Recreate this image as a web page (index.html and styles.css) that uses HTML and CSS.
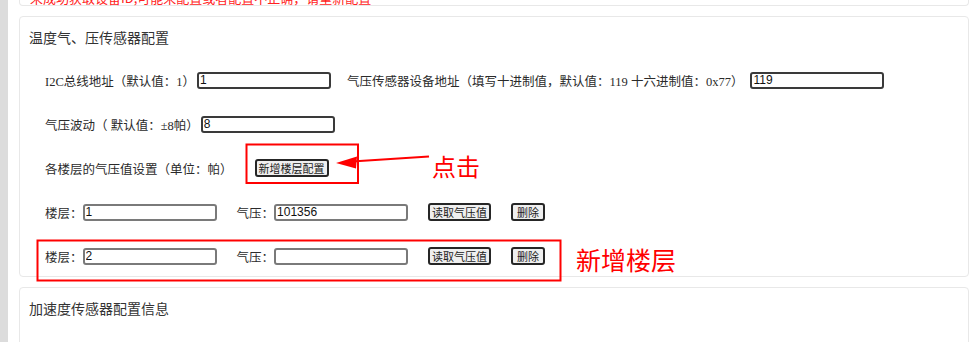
FILE: index.html
```html
<!DOCTYPE html>
<html lang="zh-CN">
<head>
  <meta charset="UTF-8">
  <title>传感器配置</title>
  <meta name="viewport" content="width=device-width, initial-scale=1.0">
  <link rel="stylesheet" href="styles.css">
</head>
<body>
  <div class="page">
    <div class="rail"></div>
    <div class="main">
      <div class="panel panel-tail">
        <p class="warn">未成功获取设备ID,可能未配置或者配置不正确，请重新配置</p>
      </div>

      <div class="panel">
        <h3 class="panel-title">温度气、压传感器配置</h3>
        <div class="form">
          <div class="row">
            <label>I2C总线地址（默认值：1）</label>
            <input class="field field-dark" type="text" value="1">
            <label class="push">气压传感器设备地址（填写十进制值，默认值：119 十六进制值：0x77）</label>
            <input class="field field-dark" type="text" value="119">
          </div>
          <div class="row">
            <label>气压波动（ 默认值：±8帕）</label>
            <input class="field field-dark" type="text" value="8">
          </div>
          <div class="row">
            <label>各楼层的气压值设置（单位：帕）</label>
            <button class="btn btn-add">新增楼层配置</button>
          </div>
          <div class="row floor">
            <label>楼层：</label>
            <input class="field" type="text" value="1">
            <label class="gap">气压：</label>
            <input class="field" type="text" value="101356">
            <button class="btn gap">读取气压值</button>
            <button class="btn btn-del gap">删除</button>
          </div>
          <div class="row floor">
            <label>楼层：</label>
            <input class="field" type="text" value="2">
            <label class="gap">气压：</label>
            <input class="field" type="text" value="">
            <button class="btn gap">读取气压值</button>
            <button class="btn btn-del gap">删除</button>
          </div>
        </div>
      </div>

      <div class="panel panel-next">
        <h3 class="panel-title">加速度传感器配置信息</h3>
      </div>
    </div>
  </div>

  <!-- red markup drawn over the screenshot -->
  <svg class="annot" width="975" height="342" viewBox="0 0 975 342">
    <rect x="246.5" y="144.5" width="111.5" height="38.5" fill="none" stroke="#ff0000" stroke-width="2"/>
    <path d="M429 156.5 L352 161.5" stroke="#ff0000" stroke-width="2.2" fill="none"/>
    <polygon points="336,163 357,156.5 356,168.5" fill="#ff0000"/>
    <text class="note" x="432" y="176">点击</text>
    <rect x="37.5" y="240.5" width="523" height="40" fill="none" stroke="#ff0000" stroke-width="2"/>
    <text class="note note-lg" x="576" y="270">新增楼层</text>
  </svg>
</body>
</html>
```

FILE: styles.css
```css
/* Reset and base styles */
* { box-sizing: border-box; margin: 0; padding: 0; }
body {
  font-family: "Liberation Serif", "Noto Sans CJK SC", serif;
  font-size: 12.5px;
  color: #2a2a2a;
  background: #fff;
  position: relative;
  height: 342px;
  overflow: hidden;
}
.page {
  display: flex;
  min-height: 342px;
}
.rail {
  flex: none;
  width: 8px;
  background: #dcdcdc;
}
.main {
  flex: 1;
  padding: 0 6px 0 11px;
}
.panel {
  background: #fff;
  border: 1px solid #e8e8e8;
  border-radius: 4px;
  padding: 10px 9px 8px;
  margin-top: 10px;
}
.panel-tail {
  margin-top: -9px;
  border-top: none;
  border-radius: 0 0 4px 4px;
  padding: 0 10px;
}
.panel-next {
  min-height: 90px;
}
.warn {
  color: #f22;
  font-family: "Noto Sans CJK SC", sans-serif;
  font-size: 13px;
  line-height: 14px;
}
.panel-title {
  font-family: "Noto Sans CJK SC", sans-serif;
  font-size: 14px;
  font-weight: 400;
  line-height: 20px;
  color: #333;
}
.form {
  display: flex;
  flex-direction: column;
  gap: 20px;
  margin-top: 21px;
  padding-left: 16px;
}
.row {
  display: flex;
  align-items: center;
  height: 24px;
  white-space: nowrap;
}
.row label {
  margin-right: 2px;
}
.row label.push { margin-left: 16px; margin-right: 7px; }
.floor label { margin-right: 0; }
.gap { margin-left: 20px; }
.field {
  width: 134px;
  height: 17px;
  border: 2px solid #7a7a7a;
  border-radius: 3px;
  padding: 0 1px;
  font-family: "Liberation Sans", Arial, sans-serif;
  font-size: 12px;
  color: #111;
  background: #fff;
  outline: none;
}
.field-dark { border-color: #3a3a3a; }
.btn {
  height: 18px;
  border: 2px solid #262626;
  border-radius: 3px;
  padding: 0 2px;
  background: #efefef;
  color: #222;
  font-family: "Noto Sans CJK SC", sans-serif;
  font-size: 11px;
  line-height: 14px;
}
.btn-add { margin-left: 20px; }
.btn-del { padding: 0 4px; }
.annot {
  position: absolute;
  top: 0;
  left: 0;
  pointer-events: none;
}
.note {
  fill: #ff0000;
  font-family: "Noto Sans CJK SC", sans-serif;
  font-size: 24px;
}
.note-lg { font-size: 25px; }
```
